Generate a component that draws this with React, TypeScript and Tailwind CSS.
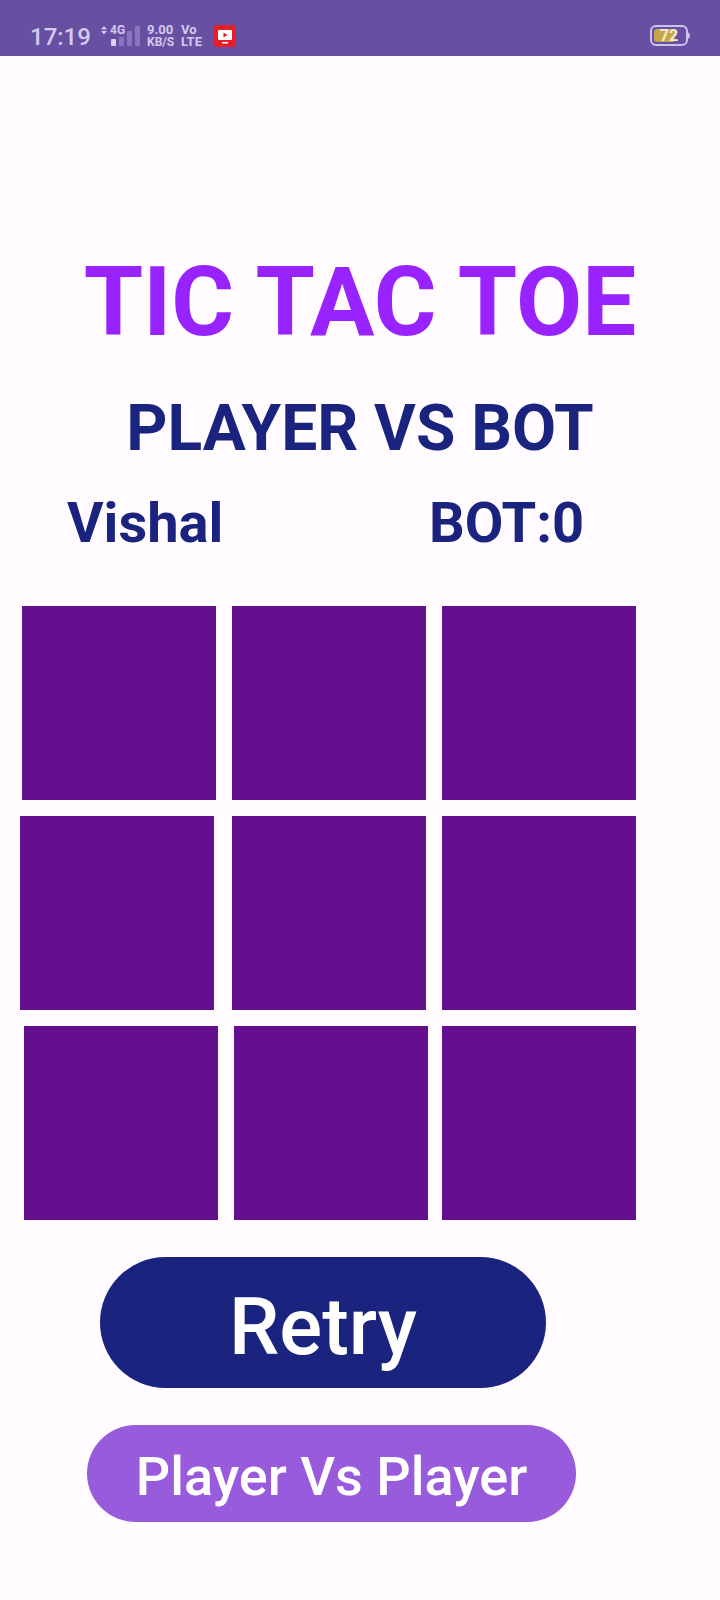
const rows = [
  { id: 0, className: "pl-[22px]", first: "mr-4", second: "mr-4" },
  { id: 1, className: "pl-5", first: "mr-[18px]", second: "mr-4" },
  { id: 2, className: "pl-6", first: "mr-4", second: "mr-[14px]" },
];

const cell = "block aspect-square min-w-0 flex-1 bg-[#640f8d]";

function StatusBar() {
  return (
    <header className="flex h-14 items-center justify-between bg-[#6750a2] px-[30px] pt-4 text-[#d5c9f0]">
      <div className="flex items-center">
        <span className="w-[70px] pt-0.5 text-2xl leading-7 font-medium">17:19</span>
        <svg className="h-6 w-10" viewBox="0 0 40 24" role="img" aria-label="4G signal">
          <path d="M1 5.500 4 2 7 5.500ZM1 7 4 10.500 7 7Z" fill="#d5c9f0" />
          <rect x="11" y="15" width="5" height="7" rx="1" fill="#ddd2f4" />
          <rect x="19" y="13" width="5" height="9" rx="1" fill="#8b76bd" />
          <rect x="27" y="7" width="5" height="15" rx="1" fill="#8b76bd" />
          <rect x="35" y="2" width="5" height="20" rx="1" fill="#8b76bd" />
          <text x="10" y="10" fontSize="12" fontWeight="700" fill="#d5c9f0">4G</text>
        </svg>
        <div className="ml-[7px] w-[34px] text-xs leading-3 font-bold">
          <div className="text-[13px] leading-3">9.00</div>
          <div>KB/S</div>
        </div>
        <div className="w-[33px] text-[13px] leading-3 font-bold">
          <div>Vo</div>
          <div>LTE</div>
        </div>
        <svg className="size-[22px]" viewBox="0 0 22 22" aria-hidden="true">
          <rect width="22" height="22" rx="2" fill="#e41f2b" />
          <rect x="4" y="5" width="14" height="10" rx="1" fill="#fff" />
          <path d="M9.500 7.500v5l4-2.500z" fill="#e41f2b" />
          <rect x="8" y="17" width="6" height="1.500" rx=".5" fill="#fff" />
        </svg>
      </div>
      <svg className="h-6 w-10" viewBox="0 0 40 24" role="img" aria-label="Battery 72 percent">
        <rect x="1" y="2" width="36" height="19" rx="5" fill="none" stroke="#cfc0f2" strokeWidth="2" />
        <path d="M38 8.500q2 .5 2 3t-2 3z" fill="#cfc0f2" />
        <rect x="4" y="5" width="21" height="13" rx="3" fill="#c4a548" />
        <text x="19" y="17" fontSize="16" fontWeight="700" textAnchor="middle" fill="#f3ead0">72</text>
      </svg>
    </header>
  );
}

export default function App() {
  return (
    <div className="min-h-screen bg-[#fffbff] font-[Roboto,sans-serif]">
      <StatusBar />
      <main className="pb-[78px] text-[#1a237e]">
        <h1 className="pt-[190px] text-center text-8xl leading-[112px] font-bold text-[#9823ff]">TIC TAC TOE</h1>
        <h2 className="mt-[33px] text-center text-[64px] leading-[76px] font-bold">PLAYER VS BOT</h2>
        <div className="mt-[23px] flex pl-[67px] text-[56px] leading-[66px] font-bold">
          <div className="w-[362px]">Vishal</div>
          <div>BOT:0</div>
        </div>
        <div className="mt-[50px] flex flex-col gap-4 pr-[84px]">
          {rows.map((row) => (
            <div key={row.id} className={`flex ${row.className}`}>
              <button type="button" aria-label={`Cell ${row.id * 3 + 1}`} className={`${cell} ${row.first}`} />
              <button type="button" aria-label={`Cell ${row.id * 3 + 2}`} className={`${cell} ${row.second}`} />
              <button type="button" aria-label={`Cell ${row.id * 3 + 3}`} className={cell} />
            </div>
          ))}
        </div>
        <div className="mt-[37px] pr-[174px] pl-[100px]">
          <button type="button" className="block w-full rounded-full bg-[#1a237e] pt-[23px] pb-[14px] text-[80px] leading-[94px] font-medium text-white">
            Retry
          </button>
        </div>
        <div className="mt-[37px] pr-[144px] pl-[87px]">
          <button type="button" className="block w-full rounded-full bg-[#985bdc] pt-5 pb-[13px] text-[54px] leading-[64px] font-medium whitespace-nowrap text-white">
            Player Vs Player
          </button>
        </div>
      </main>
    </div>
  );
}
